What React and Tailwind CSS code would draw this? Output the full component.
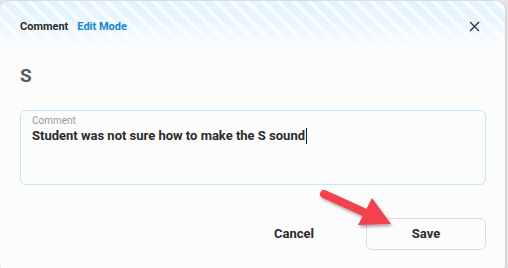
export default function App() {
  return (
    <div className="w-[508px] h-[268px] overflow-hidden bg-[#e6e6e6] relative" style={{ fontFamily: "Roboto, 'Liberation Sans', sans-serif" }}>
      <div className="mt-[1px] w-[505px] h-[272px] bg-[#fcfcfc] rounded-[9px] shadow-[1px_0_3px_rgba(0,0,0,0.12)] relative overflow-hidden">
        <div className="h-[46px] bg-[linear-gradient(to_bottom,rgba(252,252,252,0)_0%,rgba(252,252,252,0.2)_45%,#fcfcfc_100%),repeating-linear-gradient(45deg,#e2f4fe_0px,#e2f4fe_7px,#f7fcff_7px,#f7fcff_11px)] flex items-start justify-between pl-[20px] pr-[25px] pt-[18px]">
          <div className="flex items-center gap-[9px] font-bold leading-[16px] text-[11px]">
            <span className="text-[#2b2b2b]">Comment</span>
            <span className="text-[#1786cf]">Edit Mode</span>
          </div>
          <svg width="11" height="11" viewBox="0 0 11 11" className="mt-[2px]">
            <path d="M1 1 L10 10 M10 1 L1 10" stroke="#333" strokeWidth="1.4" />
          </svg>
        </div>
        <div className="px-[20px] pt-[18px] text-[19px] font-bold text-[#5a5a5a] leading-[22px]">S</div>
        <div className="mx-[20px] mt-[23px] w-[466px] h-[75px] border border-[#bfe6fb] rounded-[6px] bg-[#fcfcfc] px-[11px] pt-[4px]">
          <div className="text-[10px] text-[#9a9a9a] leading-[12px]">Comment</div>
          <div className="text-[13px] font-bold text-[#2b2b2b] leading-[18px] flex items-center">
            Student was not sure how to make the S sound<span className="inline-block w-[1px] h-[16px] bg-[#222] ml-[1px]"></span>
          </div>
        </div>
        <div className="flex items-center justify-end gap-[52px] pr-[19px] mt-[33px]">
          <span className="text-[13px] font-bold text-[#2b2b2b]">Cancel</span>
          <div className="w-[120px] h-[32px] border border-[#dcdcdc] rounded-[6px] bg-[#fcfcfc] flex items-center justify-center text-[13px] font-bold text-[#2b2b2b]">Save</div>
        </div>
      </div>
      <svg className="absolute left-[310px] top-[180px]" width="100" height="64" viewBox="0 0 100 64">
        <defs>
          <filter id="sh" x="-20%" y="-20%" width="150%" height="150%">
            <feDropShadow dx="1" dy="2" stdDeviation="1.6" floodColor="#000" floodOpacity="0.35" />
          </filter>
        </defs>
        <g filter="url(#sh)">
          <path d="M14 14 L58 34" stroke="#f2434b" strokeWidth="8" strokeLinecap="round" />
          <path d="M48 45 L81 44 L62 18 Z" fill="#f2434b" />
        </g>
      </svg>
    </div>
  );
}
